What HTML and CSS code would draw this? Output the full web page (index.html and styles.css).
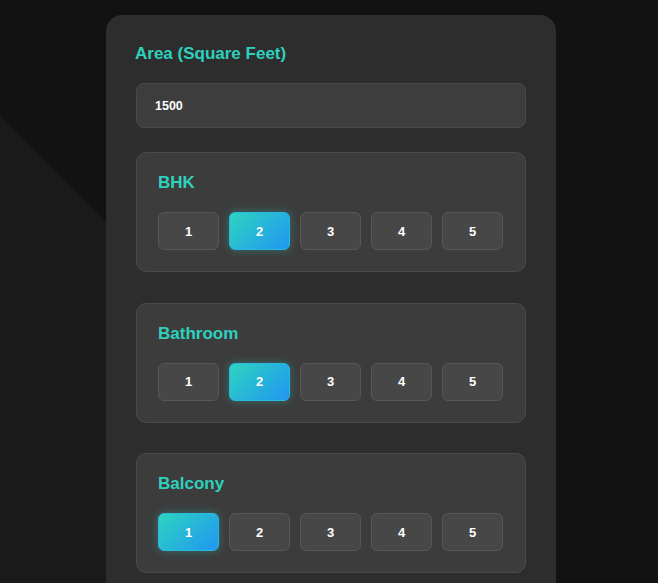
FILE: index.html
```html
<!DOCTYPE html>
<html lang="en">
<head>
<meta charset="utf-8">
<title>Property Form</title>
<link rel="stylesheet" href="styles.css">
</head>
<body>
<main class="panel">
  <label class="field-label" for="area">Area (Square Feet)</label>
  <input class="text-input" id="area" type="text" value="1500">

  <section class="group">
    <h3 class="group-title">BHK</h3>
    <div class="options">
      <button class="opt">1</button>
      <button class="opt active">2</button>
      <button class="opt">3</button>
      <button class="opt">4</button>
      <button class="opt">5</button>
    </div>
  </section>

  <section class="group">
    <h3 class="group-title">Bathroom</h3>
    <div class="options">
      <button class="opt">1</button>
      <button class="opt active">2</button>
      <button class="opt">3</button>
      <button class="opt">4</button>
      <button class="opt">5</button>
    </div>
  </section>

  <section class="group">
    <h3 class="group-title">Balcony</h3>
    <div class="options">
      <button class="opt active">1</button>
      <button class="opt">2</button>
      <button class="opt">3</button>
      <button class="opt">4</button>
      <button class="opt">5</button>
    </div>
  </section>
</main>
</body>
</html>
```

FILE: styles.css
```css
html {
  height: 100%;
  background: linear-gradient(45deg, #1a1a1a 37.7%, #121212 37.7%) fixed;
}

body {
  margin: 0;
  font-family: "Liberation Sans", Arial, sans-serif;
  color: #ffffff;
}

.panel {
  box-sizing: border-box;
  width: 450px;
  margin: 15px 0 0 106px;
  padding: 30px 30px 40px;
  background: #2d2d2d;
  border-radius: 16px;
  display: flex;
  flex-direction: column;
}

.field-label {
  display: block;
  font-size: 17px;
  font-weight: 700;
  line-height: 18px;
  color: #2ed1be;
  margin: 0 0 20px -1px;
}

.text-input {
  box-sizing: border-box;
  width: 390px;
  height: 45px;
  padding: 0 18px;
  background: #3d3d3d;
  border: 1px solid #4a4a4a;
  border-radius: 8px;
  color: #ffffff;
  font-family: "Liberation Sans", Arial, sans-serif;
  font-size: 12.5px;
  font-weight: 700;
  line-height: 14px;
  outline: none;
  margin: 0 0 24px;
}

.group {
  box-sizing: border-box;
  width: 390px;
  height: 120px;
  padding: 21px 22px 0 21px;
  background: #3c3c3c;
  border: 1px solid #4a4a4a;
  border-radius: 10px;
  margin-bottom: 30.5px;
}

.group-title {
  margin: 0 0 20px;
  font-size: 17px;
  line-height: 18px;
  font-weight: 700;
  color: #2ed1be;
}

.options {
  display: flex;
  gap: 10px;
}

.opt {
  flex: 1;
  height: 38px;
  padding: 0;
  background: #474747;
  border: 1px solid #575757;
  border-radius: 6px;
  color: #ffffff;
  font-family: "Liberation Sans", Arial, sans-serif;
  font-size: 13px;
  font-weight: 700;
  cursor: pointer;
}

.opt.active {
  background: linear-gradient(135deg, #2dd4bf, #2196f3);
  border-color: #2bb7e0;
  box-shadow: 0 0 10px rgba(45, 212, 191, 0.35);
}
```
